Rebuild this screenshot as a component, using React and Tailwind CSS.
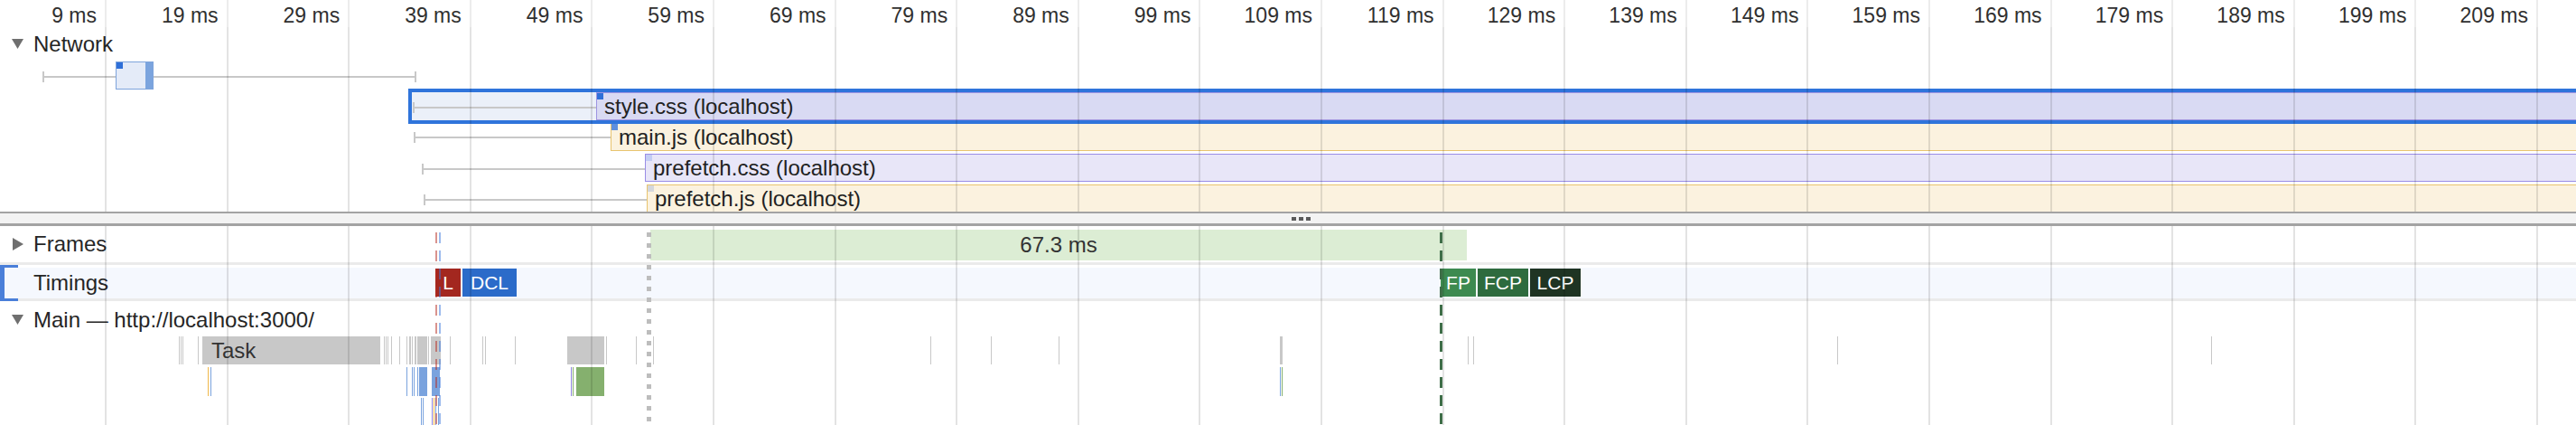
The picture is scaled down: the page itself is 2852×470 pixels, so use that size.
import React from 'react';

// ruler: one line every 10 ms, first one at 117px
const gridX = Array.from({ length: 21 }, (_, k) => 117 + 134.6 * k);

const BLUE = '#7aa3de';
const GREEN = '#85b06e';
const ORANGE = '#f0b84a';
const PURPLE = '#8f84dc';
const GREY = '#c8c8c8';

// main thread flame chart, one list per depth: [x, width, colour, label]
const flame = [
  [
    [198, 1], [200, 1], [202, 1], [219, 1], [224, 197, GREY, 'Task'],
    [425, 1], [427, 1], [429, 1], [433, 1], [442, 1],
    [450, 1], [453, 2], [456, 1], [459, 2], [462, 11], [474, 1], [477, 11],
    [498, 1], [534, 1], [537, 1], [570, 1], [628, 41], [671, 1],
    [704, 1], [723, 1], [1030, 1], [1097, 1], [1172, 1], [1417, 3],
    [1625, 1], [1631, 1], [2034, 1], [2448, 1],
  ],
  [
    [230, 1, ORANGE], [233, 1, BLUE], [450, 1, BLUE], [456, 1, BLUE], [458, 1, BLUE],
    [462, 1, BLUE], [464, 9, BLUE], [478, 9, BLUE],
    [632, 1, PURPLE], [634, 1, GREEN], [638, 31, GREEN],
    [1417, 1, BLUE], [1419, 1, GREEN],
  ],
  [
    [466, 1, BLUE], [468, 1, BLUE], [478, 1, PURPLE], [480, 1, ORANGE], [482, 1, BLUE], [485, 1, BLUE],
  ],
];
const flameRows = [
  { top: 0, h: 31 },
  { top: 34, h: 32 },
  { top: 68, h: 30 },
];

const markers = [
  { label: 'L', x: 482, w: 28, bg: 'bg-[#a3271f]' },
  { label: 'DCL', x: 512, w: 60, bg: 'bg-[#2b6bc9]' },
  { label: 'FP', x: 1595, w: 39, bg: 'bg-[#3d8a50]' },
  { label: 'FCP', x: 1636, w: 56, bg: 'bg-[#2e6b3e]' },
  { label: 'LCP', x: 1694, w: 56, bg: 'bg-[#1f3423]' },
];

const GridLines = ({ shade }) => (
  <div className="pointer-events-none absolute inset-0 z-10">
    {gridX.map((x) => (
      <div key={x} className={`absolute top-0 bottom-0 w-[2px] ${shade}`} style={{ left: x - 1 }} />
    ))}
  </div>
);

const TrackTitle = ({ open, label, className = '' }) => (
  <div className={`flex items-center gap-[11px] pl-[13px] text-[24px] text-[#262626] ${className}`}>
    <svg width="13" height="14" viewBox="0 0 13 14" className="shrink-0">
      {open ? (
        <polygon points="0,1 13,1 6.5,12" fill="#6f6f6f" />
      ) : (
        <polygon points="1,0 13,7 1,14" fill="#6f6f6f" />
      )}
    </svg>
    <span className="whitespace-nowrap">{label}</span>
  </div>
);

// grey wait line in front of a request, with its tick
const Whisker = ({ x1, x2, y, endCap }) => (
  <>
    <div className="absolute h-[2px] bg-[#c8c8c8]" style={{ left: x1, width: x2 - x1, top: y }} />
    <div className="absolute h-[12px] w-[2px] bg-[#c8c8c8]" style={{ left: x1, top: y - 5 }} />
    {endCap && <div className="absolute h-[12px] w-[2px] bg-[#c8c8c8]" style={{ left: x2 - 2, top: y - 5 }} />}
  </>
);

const RequestLabel = ({ square, children }) => (
  <>
    <div className={`absolute left-0 top-0 h-[7px] w-[7px] ${square}`} />
    <div className="flex h-full items-center whitespace-nowrap pl-[8px] text-[24px] text-[#222]">{children}</div>
  </>
);

export default function App() {
  return (
    <div className="flex h-[470px] w-[2852px] flex-col overflow-hidden bg-white font-['Liberation_Sans',Arial,sans-serif] text-[#262626]">
      {/* ruler */}
      <div className="relative h-[30px] shrink-0">
        <GridLines shade="bg-[#ececec]" />
        {gridX.map((x, k) => (
          <div
            key={k}
            className="absolute top-0 w-[120px] pt-[4px] text-right text-[23px] leading-[26px] text-[#303030]"
            style={{ left: x - 130 }}
          >
            {9 + 10 * k} ms
          </div>
        ))}
      </div>

      {/* network track */}
      <div className="relative h-[204px] shrink-0">
        <TrackTitle open label="Network" className="h-[38px]" />

        {/* document request */}
        <Whisker x1={47} x2={461} y={54} endCap />
        <div className="absolute left-[128px] top-[38px] flex h-[31px] w-[42px] border border-[#7ea4dc] bg-[#e4ebf8]">
          <div className="absolute left-0 top-0 h-[7px] w-[7px] bg-[#2f6fd8]" />
          <div className="ml-auto h-full w-[8px] bg-[#7ba4de]" />
        </div>

        {/* style.css, selected */}
        <div className="absolute left-[452px] right-[-10px] top-[68px] h-[39px] border-4 border-[#2f74db] bg-[#ebf0f9]" />
        <Whisker x1={457} x2={660} y={88} />
        <div className="absolute left-[660px] right-[-10px] top-[72px] h-[31px] border border-[#9d94e1] bg-[#d9daf3]">
          <RequestLabel square="bg-[#2f6fd8]">style.css (localhost)</RequestLabel>
        </div>

        {/* main.js */}
        <Whisker x1={458} x2={676} y={121} />
        <div className="absolute left-[676px] right-[-10px] top-[107px] h-[30px] border-b border-l border-[#e8c46f] bg-[#fbf2df]">
          <RequestLabel square="bg-[#5e8fdd]">main.js (localhost)</RequestLabel>
        </div>

        {/* prefetch.css */}
        <Whisker x1={467} x2={714} y={156} />
        <div className="absolute left-[714px] right-[-10px] top-[140px] h-[31px] border border-[#9a8de6] bg-[#e8e6f8]">
          <RequestLabel square="bg-[#c3cdf4]">prefetch.css (localhost)</RequestLabel>
        </div>

        {/* prefetch.js */}
        <Whisker x1={469} x2={716} y={190} />
        <div className="absolute left-[716px] right-[-10px] top-[174px] h-[30px] border-l border-t border-[#e8c46f] bg-[#fbf2df]">
          <RequestLabel square="bg-[#d4d7dc]">prefetch.js (localhost)</RequestLabel>
        </div>

        <GridLines shade="bg-black/[0.11]" />
      </div>

      {/* resizer */}
      <div className="relative h-[16px] shrink-0 border-b-[3px] border-t-2 border-[#a3a3a3] bg-[#f3f3f3]">
        <div className="absolute left-[1430px] top-[4px] flex gap-[3px]">
          <span className="h-[4px] w-[5px] bg-[#5a5a5a]" />
          <span className="h-[4px] w-[5px] bg-[#5a5a5a]" />
          <span className="h-[4px] w-[5px] bg-[#5a5a5a]" />
        </div>
      </div>

      {/* lower tracks */}
      <div className="relative flex min-h-0 flex-1 flex-col">
        {/* Frames */}
        <div className="relative h-[40px] shrink-0">
          <TrackTitle label="Frames" className="h-full" />
          <div className="absolute left-[720px] top-[4px] flex h-[34px] w-[904px] items-center justify-center bg-[#dcedd4] text-[24px] text-[#333]">
            67.3 ms
          </div>
        </div>

        {/* Timings */}
        <div className="relative h-[43px] shrink-0 border-y-[3px] border-[#ebebeb] pt-[3px]">
          <div className="relative flex h-[34px] items-center bg-[#f5f8fe] pl-[37px] text-[24px] text-[#262626]">
            Timings
            {markers.map((m) => (
              <div
                key={m.label}
                className={`absolute top-[1px] flex h-[31px] items-center justify-center text-[21px] text-white ${m.bg}`}
                style={{ left: m.x, width: m.w }}
              >
                {m.label}
              </div>
            ))}
          </div>
          <div className="absolute bottom-[-3px] left-0 top-0 w-[20px] border-y-[3px] border-l-[5px] border-[#4a7fd9]" />
        </div>

        {/* Main thread */}
        <TrackTitle open label="Main — http://localhost:3000/" className="h-[39px] shrink-0 pt-[3px]" />
        <div className="relative flex-1">
          {flame.map((row, d) =>
            row.map(([x, w, color = GREY, label]) => (
              <div
                key={`${d}-${x}`}
                className={`absolute flex items-center overflow-hidden text-[24px] text-[#333] ${label ? 'pl-[10px]' : ''}`}
                style={{ left: x, width: w, top: flameRows[d].top, height: flameRows[d].h, background: color }}
              >
                {label}
              </div>
            ))
          )}
        </div>

        <GridLines shade="bg-black/[0.11]" />

        {/* marker lines */}
        <div className="pointer-events-none absolute bottom-0 left-[482px] top-[7px] z-20 w-[2px] bg-[repeating-linear-gradient(to_bottom,rgba(180,40,30,0.5)_0_12px,transparent_12px_20px)]" />
        <div className="pointer-events-none absolute bottom-0 left-[486px] top-[7px] z-20 w-[2px] bg-[repeating-linear-gradient(to_bottom,rgba(60,120,220,0.5)_0_12px,transparent_12px_20px)]" />
        <div className="pointer-events-none absolute bottom-0 left-[716px] top-[7px] z-20 w-[5px] bg-[repeating-linear-gradient(to_bottom,#bdbdbd_0_5px,transparent_5px_12px)]" />
        <div className="pointer-events-none absolute bottom-0 left-[1594px] top-[7px] z-20 w-[3px] bg-[repeating-linear-gradient(to_bottom,#3e6e48_0_12px,transparent_12px_20px)]" />
      </div>
    </div>
  );
}
